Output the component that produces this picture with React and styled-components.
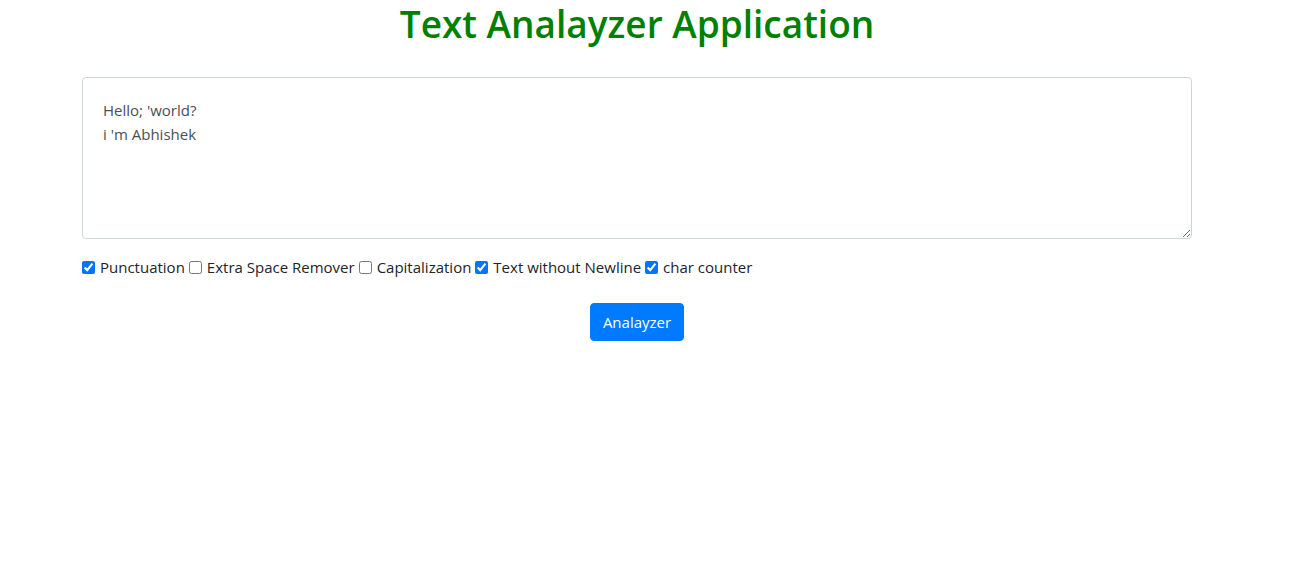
import React, { useState } from "react";
import styled, { createGlobalStyle } from "styled-components";

const Global = createGlobalStyle`
  * { box-sizing: border-box; }
  body {
    margin: 0;
    background: #fff;
    font-family: "Open Sans", "Noto Sans", "Liberation Sans", sans-serif;
    font-size: 16px;
    line-height: 1.5;
    color: #212529;
  }
`;

const Page = styled.div`
  width: 1274px;
`;

const Container = styled.div`
  max-width: 1140px;
  margin: 0 auto;
  padding: 0 15px;
`;

const Title = styled.h1`
  margin: 0 0 29px;
  padding-top: 1px;
  height: 48px;
  text-align: center;
  color: green;
  font-size: 37px;
  font-weight: 600;
  line-height: 46px;
`;

const TextArea = styled.textarea`
  display: block;
  width: 100%;
  height: 162px;
  padding: 20px;
  font-family: inherit;
  font-size: 15px;
  line-height: 24px;
  color: #495057;
  border: 1px solid #ced4da;
  border-radius: 4px;
  resize: both;
  outline: none;
  margin: 0 0 16px;
`;

const Options = styled.div`
  font-size: 15px;
  line-height: 24px;
  color: #212529;
`;

const Check = styled.input`
  margin: 0 5px 0 0;
  width: 13px;
  height: 13px;
  vertical-align: -1px;
  accent-color: #0075ff;
`;

const Label = styled.label`
  margin-right: 4px;
`;

const Center = styled.div`
  text-align: center;
  margin-top: 24px;
`;

const Button = styled.button`
  font-family: inherit;
  font-size: 15px;
  line-height: 24px;
  padding: 6px 12px;
  color: #fff;
  background: #007bff;
  border: 1px solid #007bff;
  border-radius: 4px;
  cursor: pointer;
`;

const options = [
  ["Punctuation", true],
  ["Extra Space Remover", false],
  ["Capitalization", false],
  ["Text without Newline", true],
  ["char counter", true],
];

export default function App() {
  const [text, setText] = useState("Hello; 'world?\ni 'm Abhishek");
  const [checks, setChecks] = useState(options.map((o) => o[1]));
  return (
    <Page>
      <Global />
      <Container>
        <Title>Text Analayzer Application</Title>
        <TextArea value={text} onChange={(e) => setText(e.target.value)} spellCheck={false} />
        <Options>
          {options.map(([name], i) => (
            <React.Fragment key={name}>
              <Check
                type="checkbox"
                id={"o" + i}
                checked={checks[i]}
                onChange={() => setChecks(checks.map((c, j) => (j === i ? !c : c)))}
              />
              <Label htmlFor={"o" + i}>{name}</Label>
            </React.Fragment>
          ))}
        </Options>
        <Center>
          <Button>Analayzer</Button>
        </Center>
      </Container>
    </Page>
  );
}
